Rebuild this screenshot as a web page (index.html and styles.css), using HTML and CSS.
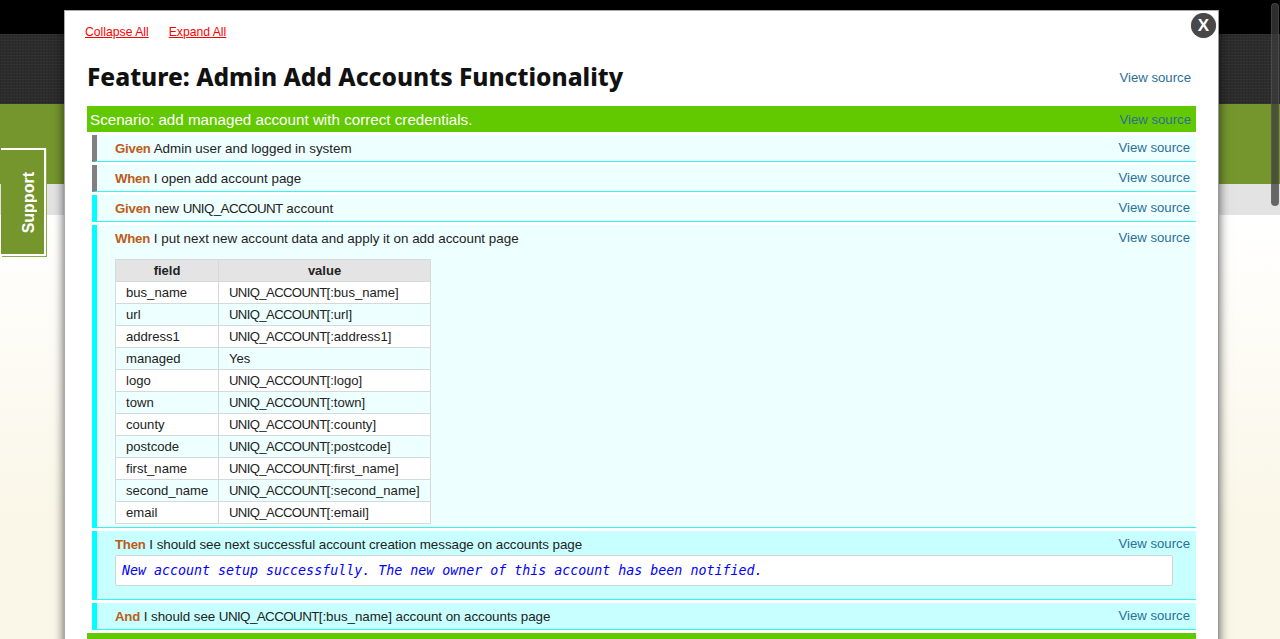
FILE: index.html
```html
<!DOCTYPE html>
<html lang="en">
<head>
<meta charset="utf-8">
<title>Feature: Admin Add Accounts Functionality</title>
<link rel="stylesheet" href="styles.css">
</head>
<body>
<div class="bg-bands">
  <div class="band-black"></div>
  <div class="band-texture"></div>
  <div class="band-green"></div>
  <div class="band-grey"></div>
  <div class="band-cream"></div>
</div>
<a class="support"><span>Support</span></a>
<div class="scrollbar"></div>
<main class="modal">
  <div class="actions"><a>Collapse All</a><a>Expand All</a></div>
  <div class="feature-head">
    <h1>Feature: Admin Add Accounts Functionality</h1>
    <a class="src">View source</a>
  </div>
  <div class="scenario"><span>Scenario: add managed account with correct credentials.</span><a class="src">View source</a></div>
  <div class="steps">
    <div class="step skipped"><div class="line"><p><b>Given</b> Admin user and logged in system</p><a class="src">View source</a></div></div>
    <div class="step skipped"><div class="line"><p><b>When</b> I open add account page</p><a class="src">View source</a></div></div>
    <div class="step"><div class="line"><p><b>Given</b> new <span class="id">UNIQ_ACCOUNT</span> account</p><a class="src">View source</a></div></div>
    <div class="step step-table">
      <div class="line"><p><b>When</b> I put next new account data and apply it on add account page</p><a class="src">View source</a></div>
      <table>
        <thead><tr><th class="c1">field</th><th class="c2">value</th></tr></thead>
        <tbody>
          <tr><td>bus_name</td><td><span class="id">UNIQ_ACCOUNT</span>[:bus_name]</td></tr>
          <tr><td>url</td><td><span class="id">UNIQ_ACCOUNT</span>[:url]</td></tr>
          <tr><td>address1</td><td><span class="id">UNIQ_ACCOUNT</span>[:address1]</td></tr>
          <tr><td>managed</td><td>Yes</td></tr>
          <tr><td>logo</td><td><span class="id">UNIQ_ACCOUNT</span>[:logo]</td></tr>
          <tr><td>town</td><td><span class="id">UNIQ_ACCOUNT</span>[:town]</td></tr>
          <tr><td>county</td><td><span class="id">UNIQ_ACCOUNT</span>[:county]</td></tr>
          <tr><td>postcode</td><td><span class="id">UNIQ_ACCOUNT</span>[:postcode]</td></tr>
          <tr><td>first_name</td><td><span class="id">UNIQ_ACCOUNT</span>[:first_name]</td></tr>
          <tr><td>second_name</td><td><span class="id">UNIQ_ACCOUNT</span>[:second_name]</td></tr>
          <tr><td>email</td><td><span class="id">UNIQ_ACCOUNT</span>[:email]</td></tr>
        </tbody>
      </table>
    </div>
    <div class="step strong step-msg">
      <div class="line tight"><p><b>Then</b> I should see next successful account creation message on accounts page</p><a class="src">View source</a></div>
      <pre class="message">New account setup successfully. The new owner of this account has been notified.</pre>
    </div>
    <div class="step strong"><div class="line tight"><p><b>And</b> I should see <span class="id">UNIQ_ACCOUNT</span>[:bus_name] account on accounts page</p><a class="src">View source</a></div></div>
  </div>
  <div class="scenario next"></div>
  <button class="close">X</button>
</main>
</body>
</html>
```
FILE: styles.css
```css
* { box-sizing: border-box; }
html, body { margin: 0; height: 639px; overflow: hidden; }
body { font-family: "Liberation Sans", Arial, sans-serif; font-size: 13.4px; color: #222; position: relative; }
.bg-bands { display: flex; flex-direction: column; height: 639px; }
.band-black { height: 34px; background: #000; }
.band-texture {
  height: 70px;
  background-color: #2c2c2c;
  background-image: repeating-linear-gradient(0deg, rgba(255,255,255,.03) 0 1px, transparent 1px 3px), repeating-linear-gradient(90deg, rgba(0,0,0,.1) 0 1px, transparent 1px 3px);
}
.band-green { height: 80px; background: #75952d; }
.band-grey { height: 31px; background: #e3e3e3; }
.band-cream { flex: 1; background: linear-gradient(#fff, #faf7e8 300px); }

.support {
  position: absolute; left: 1px; top: 148px; width: 45px; height: 108px;
  display: flex; align-items: center; justify-content: center;
  padding: 2px 0 0 13px;
  background: #75952d;
  border: 2px solid #fff; border-left: 0;
  box-shadow: 1px 1px 0 #8cab4a;
  color: #fff; font-weight: bold; font-size: 16px;
}
.support span { writing-mode: vertical-rl; transform: rotate(180deg); }

.scrollbar {
  position: absolute; left: 1271px; top: 3px; width: 8px; height: 203px;
  border-radius: 4px; background: rgba(60,60,60,.75); border: 1px solid rgba(120,120,120,.3);
}

.modal {
  position: absolute; left: 64px; top: 10px; width: 1155px; height: 700px;
  background: #fff; border: 1px solid #aaa; border-right-color: #999;
  box-shadow: 0 0 10px rgba(0,0,0,.65);
  padding: 0 22px 0 22px;
}
.actions { display: flex; gap: 20px; padding-top: 13px; margin-left: -2px; height: 40px; font-size: 12.2px; line-height: 16px; }
.actions a { color: #f00; text-decoration: underline; }
.feature-head { display: flex; justify-content: space-between; align-items: center; height: 55px; padding: 0 5px 3px 0; }
h1 { margin: 0 0 1px; font-family: "Noto Sans", sans-serif; font-weight: 800; font-size: 24.5px; line-height: 30px; color: #111; letter-spacing: 0; }
.src { color: #2a6f96; font-size: 13.2px; white-space: nowrap; }
.scenario {
  display: flex; justify-content: space-between; align-items: center;
  height: 26px; background: #62c900; color: #fff; font-size: 15.2px; padding: 1px 5px 0 3px;
}
.scenario .src { color: #2a6f96; margin-top: -1px; }
.scenario.next { margin-top: 3px; height: 30px; }
.steps { display: flex; flex-direction: column; gap: 3px; padding: 3px 0 0 5px; }
.step { background: #eeffff; border-left: 5px solid #00ffff; border-bottom: 1px solid #33f5f5; }
.step.skipped { border-left-color: #808080; }
.step.strong { background: #c8ffff; }
.line { display: flex; justify-content: space-between; min-height: 26px; padding: 5px 6px 0 18px; line-height: 17px; }
.line p { margin: 0; }
.line .src { margin-top: -1px; }
.line b { color: #bf5b18; font-weight: bold; font-size: 13.2px; letter-spacing: -.2px; }
.line.tight p { letter-spacing: -.06px; }
.id { letter-spacing: -.6px; }
table { border-collapse: collapse; margin: 8px 0 3px 18px; width: 316px; table-layout: fixed; font-size: 13.1px; color: #222; }
th, td { border: 1px solid #d3dada; height: 22px; padding: 0 10px; text-align: left; line-height: 16px; }
th { background: #e4e4e4; text-align: center; font-weight: bold; font-size: 13px; }
.c1 { width: 103px; }
tbody tr:nth-child(odd) td { background: #fff; }
tbody tr:nth-child(even) td { background: #eeffff; }
.step-msg { height: 69px; }
.message {
  margin: -2px 23px 0 18px; height: 31px; padding: 0 5px 0 6px; background: #fff;
  border: 1px solid #d3d3d3; border-radius: 2px;
  font-family: "DejaVu Sans Mono", monospace; font-style: italic; font-size: 13.3px; line-height: 29px; color: #00f;
  white-space: pre;
}
.close {
  position: absolute; left: 1126px; top: 2px; width: 25px; height: 25px; border-radius: 50%;
  background: #484848; color: #fff; border: 0; padding: 0;
  font-family: "Liberation Sans", sans-serif; font-size: 17px; font-weight: bold; line-height: 25px;
  box-shadow: 0 0 1px #aaa;
}
```
